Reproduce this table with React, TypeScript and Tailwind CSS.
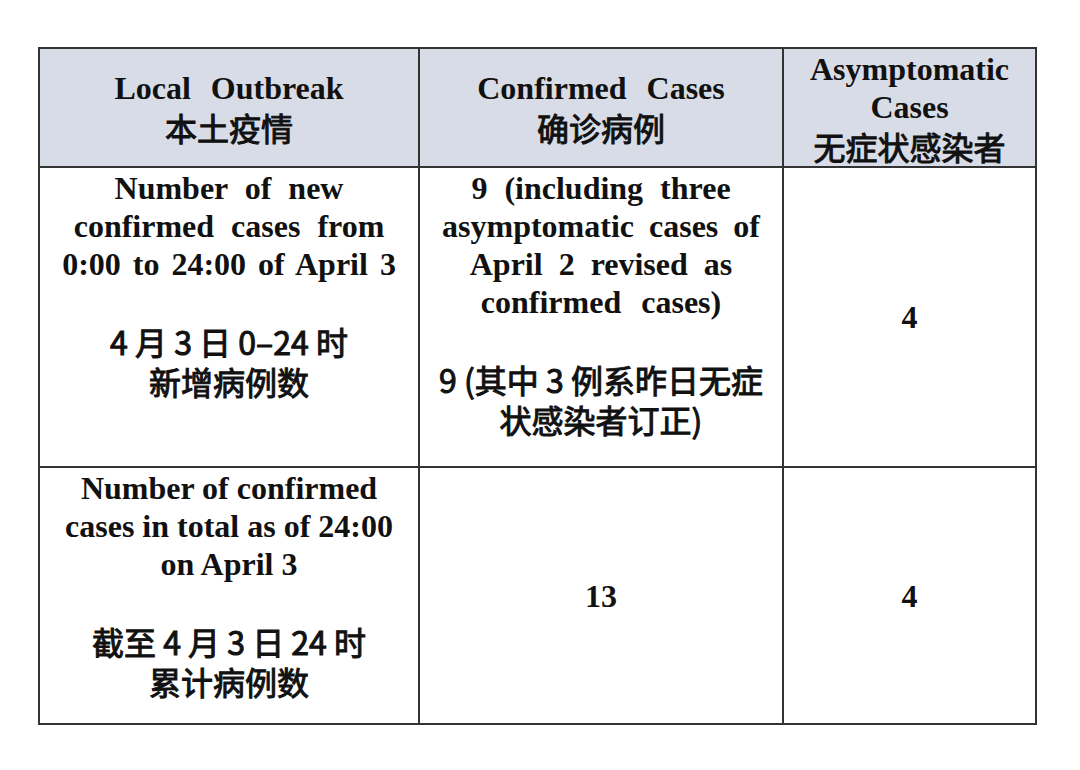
import React from 'react';

const serif = "font-['Liberation_Serif','Times_New_Roman',serif] font-bold text-[32px] leading-[38px]";
const cjk = "font-['Noto_Sans_CJK_SC','Noto_Sans',sans-serif] font-normal [-webkit-text-stroke:1px_#111] text-[32px] leading-[40px]";

interface LineProps {
  text: string;
  gap?: string;
}

const En: React.FC<LineProps> = ({ text, gap = '' }) => (
  <div className={`${serif} ${gap} whitespace-pre`}>{text}</div>
);

const Zh: React.FC<{ text: string }> = ({ text }) => (
  <div className={`${cjk} whitespace-pre`}>{text}</div>
);

const Spacer = () => <div className="h-[38px]" />;

const App: React.FC = () => {
  const cell = 'border-l-2 border-t-2 border-[#333] flex flex-col items-center text-center text-[#111]';

  return (
    <div className="w-[1080px] h-[770px] bg-white pt-[47px] pl-[38px]">
      <div className="grid w-[999px] grid-cols-[380px_364px_253px] grid-rows-[119px_300px_257px] border-r-2 border-b-2 border-[#333]">
        {/* header */}
        <div className={`${cell} justify-center bg-[#d8dce7]`}>
          <En text="Local Outbreak" gap="[word-spacing:12px]" />
          <Zh text="本土疫情" />
        </div>
        <div className={`${cell} justify-center bg-[#d8dce7]`}>
          <En text="Confirmed Cases" gap="[word-spacing:12px]" />
          <Zh text="确诊病例" />
        </div>
        <div className={`${cell} justify-center bg-[#d8dce7]`}>
          <div className={`${serif} leading-[36px]`}>Asymptomatic</div>
          <div className={`${serif} leading-[36px]`}>Cases</div>
          <Zh text="无症状感染者" />
        </div>

        {/* new cases */}
        <div className={`${cell} pt-px`}>
          <En text="Number of new" gap="[word-spacing:9px]" />
          <En text="confirmed cases from" gap="[word-spacing:9px]" />
          <En text="0:00 to 24:00 of April 3" gap="[word-spacing:4px]" />
          <Spacer />
          <Zh text="4 月 3 日 0–24 时" />
          <Zh text="新增病例数" />
        </div>
        <div className={`${cell} pt-px`}>
          <En text="9 (including three" gap="[word-spacing:9px]" />
          <En text="asymptomatic cases of" gap="[word-spacing:7px]" />
          <En text="April 2 revised as" gap="[word-spacing:8px]" />
          <En text="confirmed cases)" gap="[word-spacing:12px]" />
          <Spacer />
          <Zh text="9 (其中 3 例系昨日无症" />
          <Zh text="状感染者订正)" />
        </div>
        <div className={`${cell} justify-center`}>
          <En text="4" />
        </div>

        {/* totals */}
        <div className={`${cell} pt-px`}>
          <En text="Number of confirmed" />
          <En text="cases in total as of 24:00" />
          <En text="on April 3" />
          <Spacer />
          <Zh text="截至 4 月 3 日 24 时" />
          <Zh text="累计病例数" />
        </div>
        <div className={`${cell} justify-center`}>
          <En text="13" />
        </div>
        <div className={`${cell} justify-center`}>
          <En text="4" />
        </div>
      </div>
    </div>
  );
};

export default App;
